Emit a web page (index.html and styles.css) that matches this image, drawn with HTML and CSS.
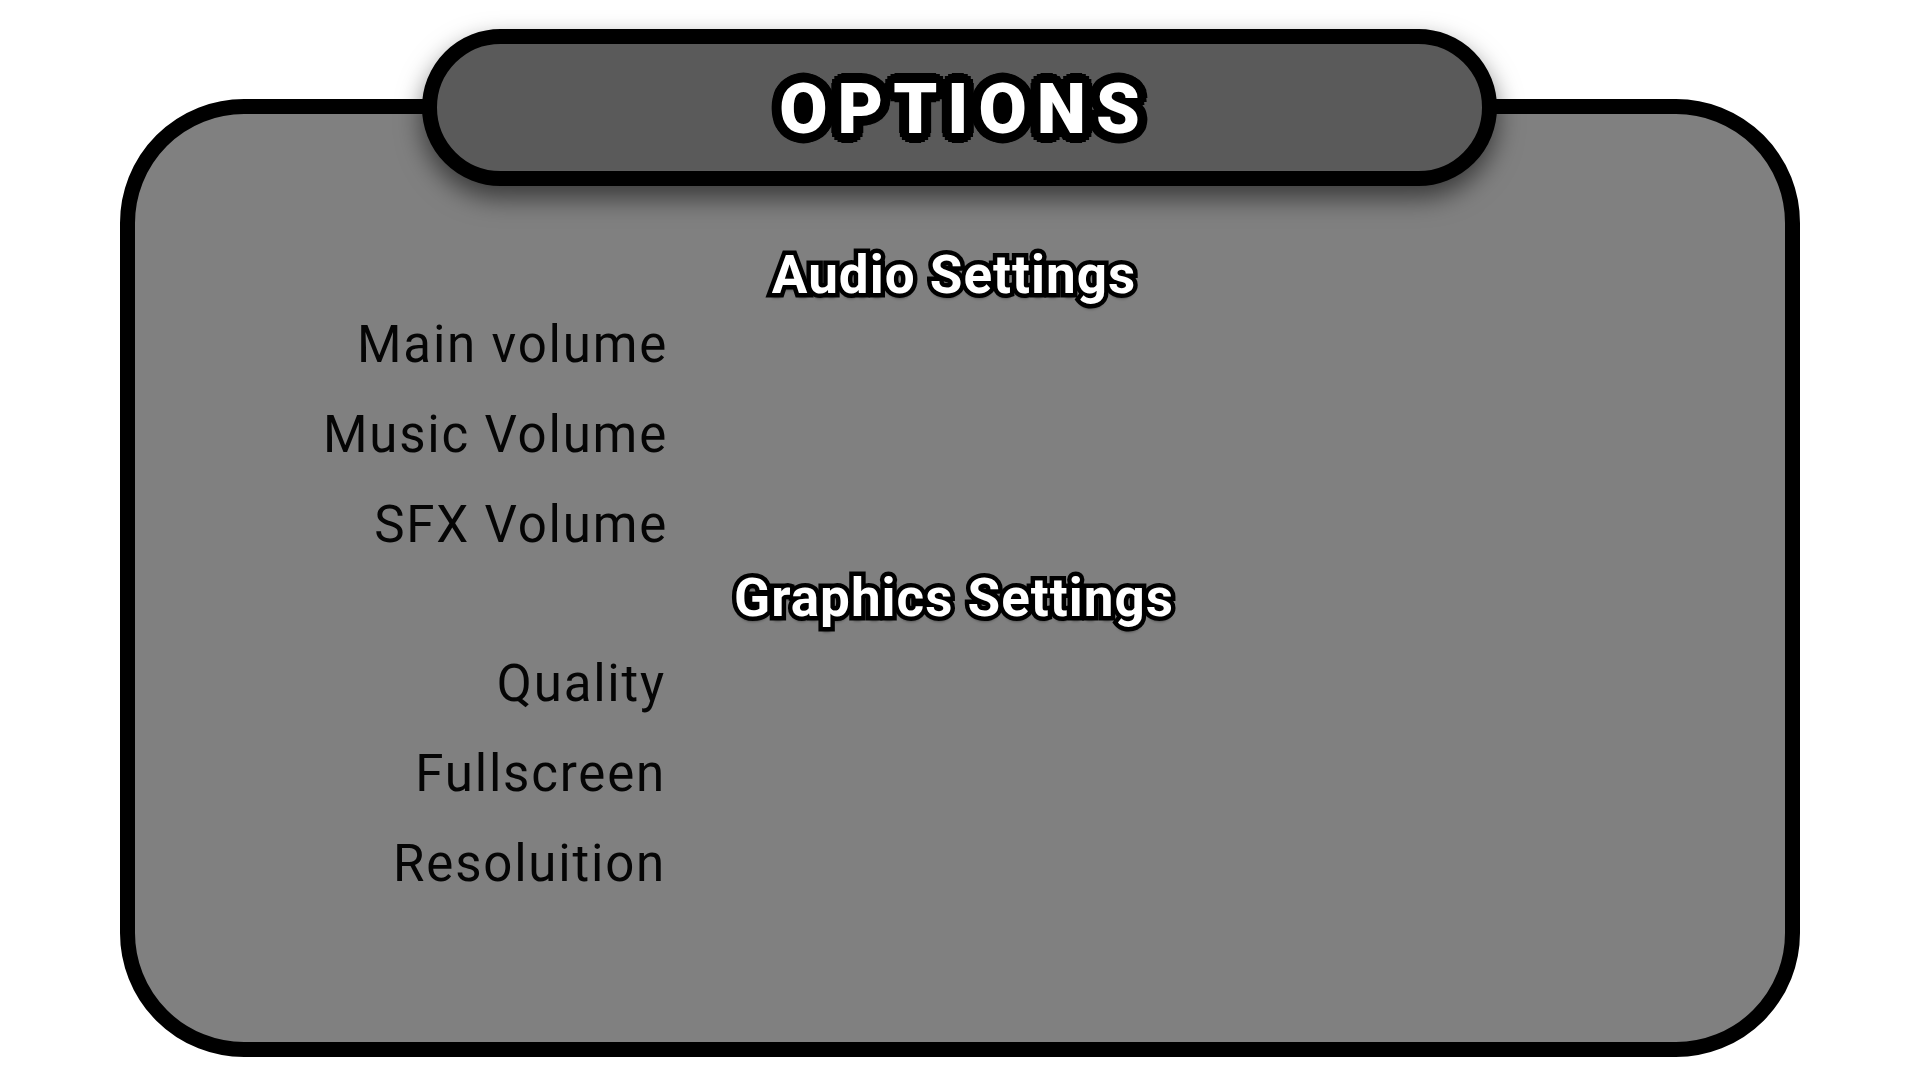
FILE: index.html
```html
<!DOCTYPE html>
<html lang="en">
<head>
<meta charset="utf-8">
<title>Options</title>
<link rel="stylesheet" href="styles.css">
</head>
<body>
<main class="screen">
  <section class="panel">
    <header class="title-pill"><h1 class="title">OPTIONS</h1></header>
    <h2 class="section-heading heading-audio">Audio Settings</h2>
    <div class="rows">
      <div class="row"><span class="label">Main volume</span><span class="control"></span></div>
      <div class="row"><span class="label">Music Volume</span><span class="control"></span></div>
      <div class="row"><span class="label">SFX Volume</span><span class="control"></span></div>
    </div>
    <h2 class="section-heading heading-graphics">Graphics Settings</h2>
    <div class="rows rows-graphics">
      <div class="row"><span class="label">Quality</span><span class="control"></span></div>
      <div class="row"><span class="label">Fullscreen</span><span class="control"></span></div>
      <div class="row"><span class="label">Resoluition</span><span class="control"></span></div>
    </div>
  </section>
</main>
</body>
</html>
```
FILE: styles.css
```css
* { box-sizing: border-box; }

html, body {
  margin: 0;
  padding: 0;
  background: #ffffff;
  width: 1920px;
  height: 1080px;
  overflow: hidden;
  font-family: Roboto, "Noto Sans", sans-serif;
}

.screen {
  padding: 99px 120px 0 120px;
}

.panel {
  position: relative;
  height: 958px;
  background: #808080;
  border: 15px solid #000;
  border-radius: 124px;
  padding-top: 137px;
}

.title-pill {
  position: absolute;
  top: -85px;
  left: 287px;
  width: 1075px;
  height: 157px;
  background: #5a5a5a;
  border: 15px solid #000;
  border-radius: 79px;
  box-shadow: 0 12px 26px rgba(0, 0, 0, 0.55);
  display: flex;
  align-items: center;
  justify-content: center;
  padding-top: 3px;
  z-index: 2;
}

.title {
  margin: 0;
  font-size: 70px;
  font-weight: 900;
  letter-spacing: 10px;
  padding-left: 10px;
  color: #fff;
  line-height: normal;
  text-shadow:
    10px 0 0 #000, 9.24px 3.83px 0 #000, 7.07px 7.07px 0 #000, 3.83px 9.24px 0 #000,
    0 10px 0 #000, -3.83px 9.24px 0 #000, -7.07px 7.07px 0 #000, -9.24px 3.83px 0 #000,
    -10px 0 0 #000, -9.24px -3.83px 0 #000, -7.07px -7.07px 0 #000, -3.83px -9.24px 0 #000,
    0 -10px 0 #000, 3.83px -9.24px 0 #000, 7.07px -7.07px 0 #000, 9.24px -3.83px 0 #000,
    5px 0 0 #000, 3.5px 3.5px 0 #000, 0 5px 0 #000, -3.5px 3.5px 0 #000,
    -5px 0 0 #000, -3.5px -3.5px 0 #000, 0 -5px 0 #000, 3.5px -3.5px 0 #000,
    3px 5px 4px rgba(0, 0, 0, 0.5);
}

.section-heading {
  margin: 0;
  height: 49px;
  line-height: 49px;
  text-align: center;
  padding-right: 12px;
  font-size: 53px;
  font-weight: 700;
  letter-spacing: 1px;
  color: #fff;
  -webkit-text-stroke: 9px #000;
  paint-order: stroke fill;
  text-shadow: 0 5px 3px rgba(0, 0, 0, 0.45);
}

.heading-graphics {
  margin-top: 4px;
}

.rows {
  display: grid;
  grid-template-columns: 533px 1fr;
}

.rows-graphics {
  margin-top: 16px;
  grid-template-columns: 531px 1fr;
}

.row {
  display: contents;
}

.label {
  height: 90px;
  line-height: 90px;
  text-align: right;
  font-size: 51px;
  font-weight: 400;
  letter-spacing: 1.8px;
  color: #050505;
  white-space: nowrap;
}

.control {
  height: 90px;
}
```
